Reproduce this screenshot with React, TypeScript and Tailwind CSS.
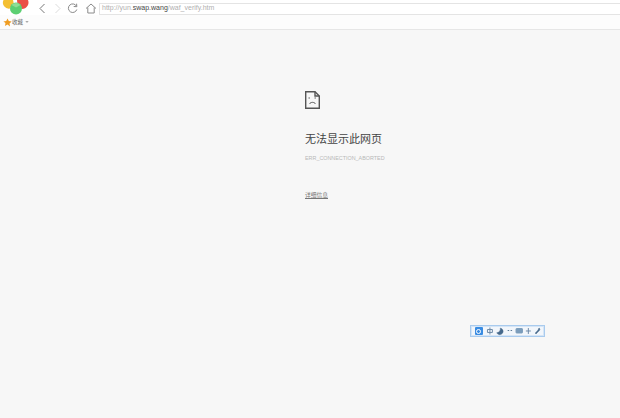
import React from "react";

const font = { fontFamily: '"Liberation Sans","Noto Sans CJK SC",sans-serif' };

function Logo() {
  return (
    <svg width="30" height="16" viewBox="0 0 30 16" className="absolute left-0 top-0">
      <path d="M3.5 0 H13 L14 4.5 A6 6 0 0 0 10 8.5 A6 6 0 0 1 3.5 0Z" fill="#f4c033" />
      <path d="M17 0 H28 A6.5 6.5 0 0 1 22 9 A7 7 0 0 0 17.5 4.5Z" fill="#ea4f47" />
      <circle cx="16" cy="8.6" r="6" fill="#5ccf72" />
      <path d="M11.5 5 A6 6 0 0 1 20.5 5 L16 7.5Z" fill="#8fdd95" />
    </svg>
  );
}

function ImeIcons() {
  return (
    <svg width="60" height="10" viewBox="0 0 60 10" className="ml-[2px] opacity-90">
      <g fill="none" stroke="#5f7f9f" strokeWidth="1">
        <path d="M2.5 3.5h5v3h-5zM5 1.5v7" />
        <path d="M15.5 2a3.4 3.4 0 1 1-3.6 4.8a4 4 0 0 0 3.6-4.8z" fill="#33597f" stroke="#33597f" strokeWidth=".4" />
        <path d="M23 4.5h1.5M26 4.5h1.5" strokeWidth="1.2" stroke="#50718f" />
        <rect x="31.5" y="2.5" width="6.5" height="4.5" rx=".5" fill="#6f93b5" stroke="#6f93b5" />
        <path d="M41.5 5h5M44 2v6" />
      </g>
      <path d="M55 2a1.7 1.7 0 0 1 .4 2.3L53.2 6.4 51.8 8l-.9-.9 1.5-1.4 1.7-1.9a1.7 1.7 0 0 1 .9-1.8z" fill="#33597f" stroke="#33597f" strokeWidth=".5" />
    </svg>
  );
}

export default function App() {
  return (
    <div style={font} className="flex h-[418px] w-[620px] flex-col overflow-hidden bg-[#f7f7f7]">
      <header className="relative flex h-[30px] shrink-0 flex-col border-b border-[#e6e6e6] bg-white">
        <Logo />
        <div className="flex h-[15px] shrink-0 items-center pt-[2px]">
          <div className="ml-[38px] flex items-center">
            <svg width="9" height="11" viewBox="0 0 9 11" fill="none" stroke="#777" strokeWidth="1">
              <path d="M6.5 1 L2 5.5 L6.5 10" />
            </svg>
            <svg width="9" height="11" viewBox="0 0 9 11" fill="none" stroke="#dcdcdc" strokeWidth="1" className="ml-[6px]">
              <path d="M2.5 1 L7 5.5 L2.5 10" />
            </svg>
            <svg width="11" height="11" viewBox="0 0 11 11" fill="none" stroke="#8a8a8a" strokeWidth="1" className="ml-[5px]">
              <path d="M9.5 3.2 A4.3 4.3 0 1 0 9.8 6.5" />
              <path d="M6.7 3.5 L9.8 3.7 L9.6 .7" />
            </svg>
            <svg width="12" height="11" viewBox="0 0 12 11" fill="none" stroke="#8a8a8a" strokeWidth="1" className="ml-[7px]">
              <path d="M1 5.5 L6 1 L11 5.5 M2.8 4.5 V10 H9.2 V4.5" />
            </svg>
          </div>
          <div className="ml-[2px] flex h-[12px] flex-1 items-center rounded-l-[1px] border border-r-0 border-[#e4e4e4] bg-white pl-[2px] text-[7px] text-[#b0b0b0]">
            <span>http://yun.</span>
            <span className="text-[#444]">swap.wang</span>
            <span>/waf_verify.htm</span>
          </div>
        </div>
        <div className="flex flex-1 items-center bg-[#fcfcfc] pl-[3px]">
          <svg width="9" height="9" viewBox="0 0 24 24" fill="#ef9d22">
            <path d="M12 1l3.4 7.2 7.6 1-5.6 5.4 1.4 7.8L12 17.6l-6.8 3.8 1.4-7.8L1 9.2l7.6-1z" />
          </svg>
          <span className="text-[5.5px] text-[#666]">收藏</span>
          <svg width="4" height="2" viewBox="0 0 5 3" className="ml-[2px]">
            <path d="M0 0h5L2.5 3z" fill="#aaa" />
          </svg>
        </div>
      </header>
      <main className="relative flex-1">
        <div className="ml-[305px] flex w-[120px] flex-col items-start pt-[61px]">
          <svg width="15" height="18" viewBox="0 0 15 18" fill="none" stroke="#555" strokeWidth="1.4">
            <path d="M.7.7H10L14.3 5V17.3H.7Z" />
            <path d="M10 .7V5H14.3" />
            <path d="M3.5 7h1.4M9.5 7h1.4" strokeWidth="1.2" />
            <path d="M4.5 13c1-2.2 5-2.2 6 0" strokeWidth="1" />
          </svg>
          <h1 className="mt-[22px] text-[11px] leading-[16px] font-normal whitespace-nowrap text-[#444]">无法显示此网页</h1>
          <p className="mt-[6px] text-[5.4px] leading-[10px] whitespace-nowrap text-[#b8b8b8]">ERR_CONNECTION_ABORTED</p>
          <a className="mt-[28px] text-[5.75px] leading-[9px] text-[#777] underline">详细信息</a>
        </div>
        <div className="absolute left-[470px] top-[295px] flex h-[12px] w-[75px] items-center border border-[#a9cbee] bg-[#f2f6fb] pl-[4px] shadow-[0_0_0_1px_#d5e5f6_inset]">
          <span className="flex h-[8px] w-[8px] items-center justify-center rounded-[1px] bg-[#3a8ce2]">
            <span className="h-[5px] w-[5px] rounded-full border border-white" />
          </span>
          <ImeIcons />
        </div>
      </main>
    </div>
  );
}
